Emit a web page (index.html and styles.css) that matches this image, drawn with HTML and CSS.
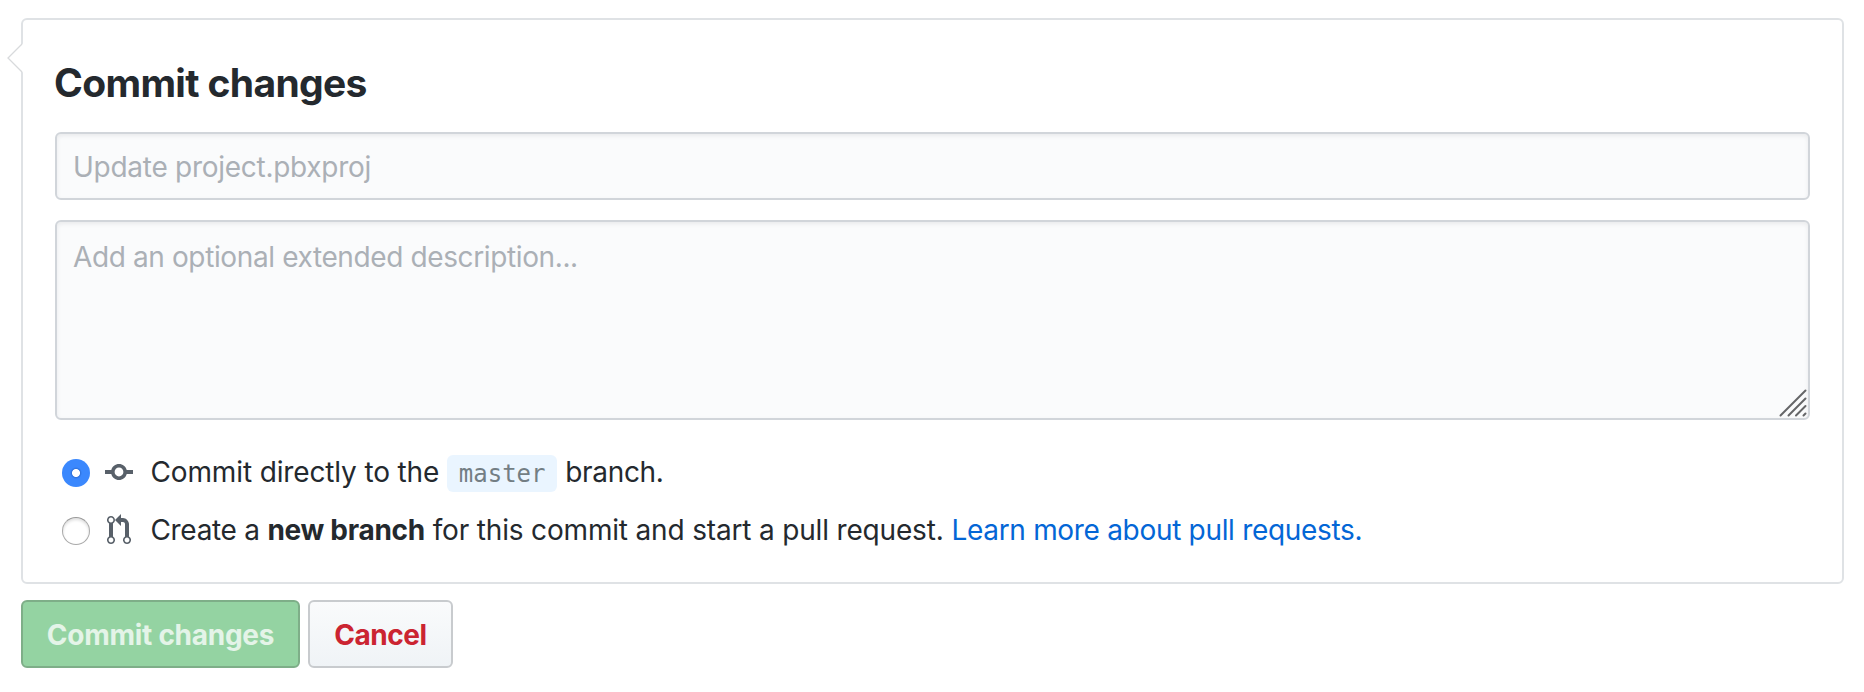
FILE: index.html
```html
<!DOCTYPE html>
<html lang="en">
<head>
<meta charset="utf-8">
<title>Commit changes</title>
<link rel="stylesheet" href="styles.css">
</head>
<body>
<form class="commit-form">
  <section class="panel">
    <svg class="caret" width="16" height="32" viewBox="0 0 16 32"><path d="M16 1.500L1.500 16L16 30.500Z" fill="#fff"/><path d="M15 2L1 16L15 30" fill="none" stroke="#d8dadc" stroke-width="1.300"/></svg>
    <h1 class="title">Commit changes</h1>
    <div class="field summary"><span class="summary-text">Update project.pbxproj</span></div>
    <div class="field description">
      <span class="description-text">Add an optional extended description...</span>
      <svg class="grip" width="28" height="28" viewBox="0 0 28 28" fill="none" stroke="#656668" stroke-width="2" stroke-linecap="round"><path d="M1.500 26.500L26.500 1.500M9.500 26.500L26.500 9.500M17 26.500L26.500 17M24.500 26.500L26.500 24.500"/></svg>
    </div>
    <div class="choices">
      <label class="choice">
        <span class="radio radio-on"></span>
        <span class="icon"><svg width="28" height="32" viewBox="0 0 14 16"><path fill-rule="evenodd" d="M10.860 7c-.45-1.720-2-3-3.860-3-1.860 0-3.410 1.280-3.860 3H0v2h3.140c.45 1.720 2 3 3.860 3 1.860 0 3.410-1.280 3.860-3H14V7h-3.140zM7 10.200c-1.220 0-2.200-.98-2.200-2.200 0-1.220.98-2.200 2.200-2.200 1.220 0 2.200.98 2.200 2.200 0 1.220-.98 2.200-2.200 2.200z"/></svg></span>
        <span class="choice-text"><span class="direct">Commit directly to the</span><code class="branch">master</code><span class="tail">branch.</span></span>
      </label>
      <label class="choice">
        <span class="radio"></span>
        <span class="icon"><svg width="24" height="32" viewBox="0 0 12 16"><path fill-rule="evenodd" d="M11 11.280V5c-.03-.78-.34-1.470-.94-2.060C9.460 2.350 8.780 2.030 8 2H7V0L4 3l3 3V4h1c.27.02.48.11.69.31.21.2.3.42.31.69v6.280A1.993 1.993 0 0 0 10 15a1.993 1.993 0 0 0 1-3.720zm-1 2.920c-.66 0-1.200-.55-1.200-1.200 0-.65.55-1.200 1.200-1.200.65 0 1.200.55 1.200 1.200 0 .65-.55 1.200-1.200 1.200zM4 3c0-1.110-.89-2-2-2a1.993 1.993 0 0 0-1 3.720v6.560A1.993 1.993 0 0 0 2 15a1.993 1.993 0 0 0 1-3.720V4.720c.59-.34 1-.98 1-1.720zm-.8 10c0 .66-.55 1.200-1.200 1.200-.65 0-1.200-.55-1.200-1.200 0-.65.55-1.200 1.200-1.200.65 0 1.200.55 1.200 1.200zM2 4.200C1.340 4.200.8 3.650.8 3c0-.65.55-1.200 1.200-1.200.65 0 1.200.55 1.200 1.200 0 .65-.55 1.200-1.200 1.200z"/></svg></span>
        <span class="choice-text"><span class="create">Create a</span> <strong class="new-branch">new branch</strong> <span class="for-commit">for this commit and start a pull request.</span> <a class="link">Learn more about pull requests.</a></span>
      </label>
    </div>
  </section>
  <div class="actions">
    <button type="button" class="btn btn-primary">Commit changes</button>
    <button type="button" class="btn btn-danger">Cancel</button>
  </div>
</form>
</body>
</html>
```
FILE: styles.css
```css
* { box-sizing: border-box; }
body {
  margin: 0;
  background: #fff;
  color: #24292e;
  font: 28px/42px Inter, "Liberation Sans", sans-serif;
}
.commit-form { padding: 18px 20px 0 21px; }
.panel {
  position: relative;
  height: 566px;
  padding: 39px 32px 0;
  border: 2px solid #dfe2e5;
  border-radius: 6px;
}
.caret { position: absolute; left: -16px; top: 22px; }
.title {
  margin: 0 0 25px -1px;
  font-size: 39px;
  line-height: 48px;
  font-weight: 700;
  letter-spacing: -.65px;
  white-space: nowrap;
}
.field {
  border: 2px solid #d1d5da;
  border-radius: 6px;
  background: #fafbfc;
  box-shadow: inset 0 2px 4px rgba(27, 31, 35, .075);
  color: #abb0b6;
  padding: 12px 16px;
  line-height: 42px;
}
.summary { height: 68px; margin-bottom: 20px; }
.summary-text { letter-spacing: -.27px; }
.description { position: relative; height: 200px; padding-top: 14px; }
.description-text { letter-spacing: -.38px; }
.grip { position: absolute; right: 1px; bottom: 1px; }
.choices { padding: 32px 0 0 7px; display: flex; flex-direction: column; gap: 16px; }
.choice { display: flex; align-items: center; height: 42px; }
.radio {
  width: 28px;
  height: 28px;
  border-radius: 50%;
  border: 1px solid #aaa;
  border-top-color: #999;
  background: #fff;
  box-shadow: inset 0 2px 3px rgba(0, 0, 0, .13);
}
.radio-on {
  border: 0;
  background: radial-gradient(circle, #fff 0 3.6px, #2f73df 4.4px, #3b88fd 6px);
  box-shadow: none;
}
.icon { width: 28px; height: 34px; margin: 0 17.5px 0 15px; display: flex; justify-content: center; }
.icon svg { display: block; fill: #586069; }
.choice-text { display: block; padding-bottom: 2px; white-space: nowrap; }
.direct { letter-spacing: -.14px; }
.branch {
  display: inline-block;
  width: 110px;
  height: 37px;
  margin: 0 8px;
  border-radius: 6px;
  background: #eaf5ff;
  color: #737e84;
  font: 24px/39px "DejaVu Sans Mono", monospace;
  text-align: center;
}
.tail { letter-spacing: -.3px; }
.create { letter-spacing: -.33px; }
.new-branch { font-weight: 700; letter-spacing: -.3px; }
.for-commit { letter-spacing: -.17px; }
.link { color: #0366d6; letter-spacing: -.31px; }
.actions { display: flex; gap: 8px; padding-top: 16px; }
.btn {
  height: 68px;
  border: 2px solid;
  border-radius: 6px;
  padding: 2px 0 0;
  font: 700 28px/40px Inter, "Liberation Sans", sans-serif;
  letter-spacing: -.27px;
  white-space: nowrap;
}
.btn-primary { width: 279px; background: #94d3a2; border-color: #7eae88; color: #e4f4e8; }
.btn-danger { width: 145px; background: linear-gradient(#fafbfc, #eff3f6) border-box; border-color: #c8cbce; color: #cb2431; letter-spacing: -.45px; }
```
